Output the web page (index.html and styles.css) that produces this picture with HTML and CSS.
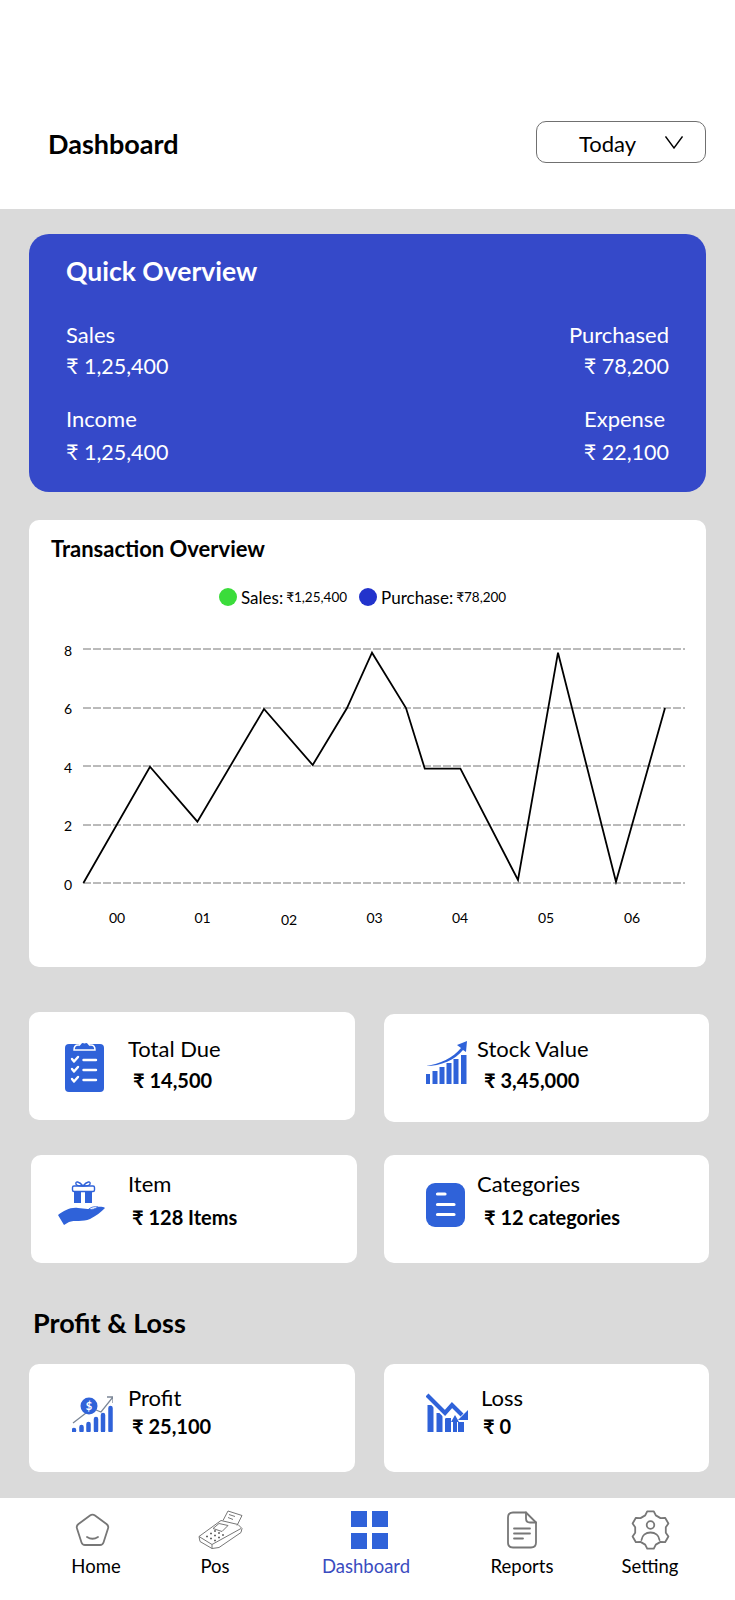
FILE: index.html
```html
<!DOCTYPE html>
<html lang="en">
<head>
    <meta charset="UTF-8">
    <meta name="viewport" content="width=device-width, initial-scale=1.0">
    <title>Dashboard</title>
    <link rel="stylesheet" href="styles.css">
</head>
<body>
    <header class="top-bar">
        <h1>Dashboard</h1>
        <div class="range-select">
            <span>Today</span>
            <svg class="chevron" viewBox="0 0 18 13"><path d="M0.5 0.5 L9 12 L17.5 0.5"/></svg>
        </div>
    </header>

    <main class="content">
        <section class="quick">
            <h2>Quick Overview</h2>
            <div class="quick-grid">
                <div>
                    <div class="quick-label">Sales</div>
                    <div class="quick-value">₹ 1,25,400</div>
                </div>
                <div class="quick-right">
                    <div class="quick-label">Purchased</div>
                    <div class="quick-value">₹ 78,200</div>
                </div>
                <div class="quick-lower">
                    <div class="quick-label">Income</div>
                    <div class="quick-value">₹ 1,25,400</div>
                </div>
                <div class="quick-right quick-lower">
                    <div class="quick-label expense-label">Expense</div>
                    <div class="quick-value">₹ 22,100</div>
                </div>
            </div>
        </section>

        <section class="transactions">
            <h3>Transaction Overview</h3>
            <div class="legend">
                <span class="dot dot-green"></span>
                <span class="legend-name">Sales:</span>
                <span class="legend-amount legend-amount-first">₹1,25,400</span>
                <span class="dot dot-blue"></span>
                <span class="legend-name">Purchase:</span>
                <span class="legend-amount">₹78,200</span>
            </div>
            <svg class="chart" viewBox="0 0 677 300">
                <line class="grid-line" x1="54" y1="19" x2="656" y2="19"/>
                <line class="grid-line" x1="54" y1="78" x2="656" y2="78"/>
                <line class="grid-line" x1="54" y1="136" x2="656" y2="136"/>
                <line class="grid-line" x1="54" y1="195" x2="656" y2="195"/>
                <line class="grid-line" x1="54" y1="253" x2="656" y2="253"/>
                <polyline class="chart-line" points="54.4,253 121,136.7 168.4,191.7 235,79 283.7,135 318,78 343,22.7 377,78 395.8,138.7 431.4,138.7 489,250 529,22.7 587,251.7 636,78"/>
                <text class="axis-y" x="39" y="26">8</text>
                <text class="axis-y" x="39" y="84">6</text>
                <text class="axis-y" x="39" y="143">4</text>
                <text class="axis-y" x="39" y="201">2</text>
                <text class="axis-y" x="39" y="260">0</text>
                <text class="axis-x" x="88" y="293">00</text>
                <text class="axis-x" x="173.5" y="293">01</text>
                <text class="axis-x" x="260" y="295">02</text>
                <text class="axis-x" x="345.6" y="293">03</text>
                <text class="axis-x" x="431" y="293">04</text>
                <text class="axis-x" x="517" y="293">05</text>
                <text class="axis-x" x="603" y="293">06</text>
            </svg>
        </section>

        <section class="stats-grid">
            <div class="stat-card stat-due">
                <svg class="stat-icon" width="39" height="56" viewBox="0 0 39 56">
                    <rect class="fill-blue" x="0" y="8" width="39" height="48" rx="4"/>
                    <path class="clip-edge" d="M9 14 Q9 9 13 9 H14.500 A5.500 5.500 0 0 1 24.500 9 H26 Q30 9 30 14 Z"/>
                    <circle class="fill-white" cx="19.500" cy="6" r="1.600"/>
                    <path class="icon-white" d="M7 23 L9 25.500 L13 21 M7 33 L9 35.500 L13 31 M7 43 L9 45.500 L13 41"/>
                    <path class="icon-white" d="M18.500 24 H31 M18.500 34 H31 M18.500 44 H31"/>
                </svg>
                <div class="stat-text">
                    <div class="stat-label">Total Due</div>
                    <div class="stat-value">₹ 14,500</div>
                </div>
            </div>
            <div class="stat-card stat-stock">
                <svg class="stat-icon" width="41" height="43" viewBox="0 0 41 43">
                    <rect class="fill-blue" x="0" y="33" width="4" height="10"/>
                    <rect class="fill-blue" x="6.500" y="30" width="5" height="13"/>
                    <rect class="fill-blue" x="13.500" y="26" width="5" height="17"/>
                    <rect class="fill-blue" x="20.500" y="22" width="5" height="21"/>
                    <rect class="fill-blue" x="27.500" y="18" width="5" height="25"/>
                    <rect class="fill-blue" x="35" y="14" width="5.500" height="29"/>
                    <path class="fill-blue" d="M0 25 C14 23 27 17 35 7 L31 4 L41 0 L40 11 L37 9 C29 19 15 25 0 25 Z"/>
                </svg>
                <div class="stat-text">
                    <div class="stat-label">Stock Value</div>
                    <div class="stat-value">₹ 3,45,000</div>
                </div>
            </div>
            <div class="stat-card stat-item">
                <svg class="stat-icon" width="47" height="44" viewBox="0 0 47 44">
                    <path class="gift-line" d="M25 5 C21 0 17 0 18 3 C18 5 22 5 25 5 C28 5 32 5 32 3 C33 0 29 0 25 5 Z"/>
                    <rect class="gift-line" x="14.500" y="5" width="22" height="5.500" rx="1.500"/>
                    <rect class="fill-blue" x="16" y="11" width="7" height="11"/>
                    <rect class="fill-blue" x="27" y="11" width="7" height="11"/>
                    <path class="fill-blue" d="M0 34 C6 30 12 26 20 27 C25 27 30 29 34 27 C38 26 44 25 47 27 C43 31 38 35 32 38 C25 41 16 39 11 41 L6 44 Z"/>
                    <path class="hand-fold" d="M31 28 C33 26 37 25 40 26 C37 28 34 29 31 28 Z"/>
                </svg>
                <div class="stat-text">
                    <div class="stat-label">Item</div>
                    <div class="stat-value">₹ 128 Items</div>
                </div>
            </div>
            <div class="stat-card stat-categories">
                <svg class="stat-icon" width="39" height="44" viewBox="0 0 39 44">
                    <rect class="fill-blue" x="0" y="0" width="39" height="44" rx="9"/>
                    <path class="icon-white icon-thick" d="M11.500 11 H19 M11.500 21.500 H28 M11.500 31.500 H28"/>
                </svg>
                <div class="stat-text">
                    <div class="stat-label">Categories</div>
                    <div class="stat-value">₹ 12 categories</div>
                </div>
            </div>
        </section>

        <h2 class="section-title">Profit &amp; Loss</h2>

        <section class="stats-grid">
            <div class="stat-card stat-profit">
                <svg class="stat-icon" width="41" height="37" viewBox="0 0 41 37">
                    <path class="bar-round" d="M2 35.500 V35 M9.500 35.500 V32 M16.500 35.500 V29 M24 35.500 V24 M31 35.500 V20 M38.500 35.500 V13"/>
                    <path class="arrow-gray" d="M1 28 L14 18 M24 15 L29 17 L41 2 M35 2 H41 V8"/>
                    <circle class="fill-blue" cx="17" cy="11" r="8.500"/>
                    <text class="coin-text" x="17" y="15">$</text>
                </svg>
                <div class="stat-text">
                    <div class="stat-label">Profit</div>
                    <div class="stat-value">₹ 25,100</div>
                </div>
            </div>
            <div class="stat-card stat-loss">
                <svg class="stat-icon" width="42" height="39" viewBox="0 0 42 39">
                    <rect class="fill-blue" x="1.500" y="12" width="6" height="27"/>
                    <rect class="fill-blue" x="10.500" y="20" width="6" height="19"/>
                    <rect class="fill-blue" x="19" y="25" width="6" height="14"/>
                    <rect class="fill-blue" x="32" y="29" width="6" height="10"/>
                    <path class="loss-edge" d="M1 2 L19 20 L26 12 L36 22"/>
                    <path class="loss-line" d="M1 2 L19 20 L26 12 L36 22"/>
                    <path class="fill-blue" d="M32 27 H42 V17 Z"/>
                    <path class="fill-blue" d="M27 39 V29 H25 L29 22 L33 29 H31 V39 Z"/>
                </svg>
                <div class="stat-text">
                    <div class="stat-label">Loss</div>
                    <div class="stat-value">₹ 0</div>
                </div>
            </div>
        </section>
    </main>

    <nav class="bottom-nav">
        <div class="nav-item">
            <svg class="nav-icon nav-icon-home" width="37" height="36" viewBox="0 0 37 36">
                <path class="line-gray" d="M16 3.500 Q18.500 1.700 21 3.500 L32.500 12 Q35 14 34 16.500 L29.500 30.500 Q28.700 33 26 33 H11 Q8.300 33 7.500 30.500 L3 16.500 Q2 14 4.500 12 Z"/>
                <path class="line-gray" d="M13 25 Q18.500 28.500 24 25"/>
            </svg>
            <span>Home</span>
        </div>
        <div class="nav-item">
            <svg class="nav-icon nav-icon-pos" width="46" height="39" viewBox="0 0 46 39">
                <path class="line-thin" d="M1 26 L23 10 L40 14 L44 18 L43 22 L21 37 L14 38 L2 31 Z"/>
                <path class="line-thin" d="M1 26 L14 34 L14 38 M14 34 L43 18"/>
                <path class="line-thin" d="M21 13 L30 15 L24 21 L15 18 Z"/>
                <path class="line-thin" d="M25 10 L30 0.500 L44 5 L39 15"/>
                <path class="line-thin" d="M31 4 L37 6 M30 7 L35 9"/>
                <path class="key-dots" d="M8 26 H10 M12 28 H14 M16 30 H18 M12 23 H14 M16 25 H18 M20 27 H22 M16 20.500 H18 M20 22.500 H22 M24 24.500 H26"/>
            </svg>
            <span>Pos</span>
        </div>
        <div class="nav-item nav-active">
            <svg class="nav-icon nav-icon-dash" width="38" height="38" viewBox="0 0 38 38">
                <rect class="fill-blue" x="0" y="0" width="16" height="16"/>
                <rect class="fill-blue" x="21" y="0" width="16" height="16"/>
                <rect class="fill-blue" x="0" y="22" width="16" height="16"/>
                <rect class="fill-blue" x="21" y="22" width="16" height="16"/>
            </svg>
            <span>Dashboard</span>
        </div>
        <div class="nav-item">
            <svg class="nav-icon" width="30" height="37" viewBox="0 0 30 37">
                <path class="line-gray" d="M19 1 H6 Q1 1 1 6 V31 Q1 36 6 36 H24 Q29 36 29 31 V11 Z"/>
                <path class="line-gray" d="M19 1 V7 Q19 11 23 11 H29"/>
                <path class="line-gray" d="M7 17 H23 M7 22 H23 M7 27 H16"/>
            </svg>
            <span>Reports</span>
        </div>
        <div class="nav-item">
            <svg class="nav-icon" width="39" height="40" viewBox="0 0 39 40">
                <path class="line-gray" d="M16.200 1.300 H22.800 L24.800 5.400 L29.500 8.100 L34.100 7.800 L37.400 13.500 L34.800 17.300 V22.700 L37.400 26.500 L34.100 32.200 L29.500 31.900 L24.800 34.600 L22.800 38.700 H16.200 L14.200 34.600 L9.500 31.900 L4.900 32.200 L1.600 26.500 L4.200 22.700 V17.300 L1.600 13.500 L4.900 7.800 L9.500 8.100 L14.200 5.400 Z"/>
                <circle class="line-gray" cx="19.500" cy="15" r="3.800"/>
                <path class="line-gray" d="M10.500 30 C11 25 15 22.500 19.500 22.500 C24 22.500 28 25 28.500 30"/>
            </svg>
            <span>Setting</span>
        </div>
    </nav>
</body>
</html>
```

FILE: styles.css
```css
* {
    box-sizing: border-box;
}
body {
    margin: 0;
    font-family: Lato, "Open Sans", sans-serif;
    background-color: #fff;
    color: #000;
}
h1, h2, h3 {
    margin: 0;
}

/* header */
.top-bar {
    display: flex;
    justify-content: space-between;
    align-items: center;
    height: 209px;
    padding: 121px 29px 46px 48px;
}
.top-bar h1 {
    font-size: 27px;
    font-weight: 700;
    margin-top: 2px;
}
.range-select {
    display: flex;
    align-items: center;
    width: 170px;
    height: 42px;
    padding-left: 42px;
    border: 1px solid #707070;
    border-radius: 10px;
    font-size: 22px;
}
.range-select span {
    margin-top: 2px;
}
.chevron {
    width: 18px;
    height: 13px;
    margin-left: 29px;
    fill: none;
    stroke: #000;
    stroke-width: 1.4;
}

/* grey area */
.content {
    padding: 25px 26px 26px 29px;
    background-color: #dadada;
}

.quick {
    width: 677px;
    height: 258px;
    padding: 20px 37px 0;
    border-radius: 20px;
    background-color: #3549c9;
    color: #fff;
}
.quick h2 {
    font-size: 26.500px;
    line-height: 34px;
    font-weight: 700;
}
.quick-grid {
    display: grid;
    grid-template-columns: 1fr 1fr;
    row-gap: 22px;
    margin-top: 32px;
}
.quick-right {
    text-align: right;
}
.quick-label {
    font-size: 22px;
    line-height: 30px;
}
.quick-value {
    font-size: 21.500px;
    line-height: 32px;
}
.quick-lower .quick-value {
    margin-top: 2px;
}
.expense-label {
    margin-right: 4px;
}

.transactions {
    width: 677px;
    height: 447px;
    margin-top: 28px;
    padding-top: 14px;
    border-radius: 10px;
    background-color: #fff;
}
.transactions h3 {
    margin-left: 22px;
    font-size: 22px;
    line-height: 30px;
    font-weight: 700;
}
.legend {
    display: flex;
    align-items: center;
    height: 20px;
    margin-top: 23px;
    padding-left: 190px;
}
.dot {
    width: 18px;
    height: 18px;
    margin-right: 4px;
    border-radius: 50%;
}
.dot-green {
    background-color: #3bdc3b;
}
.dot-blue {
    background-color: #2233cc;
}
.legend-name {
    font-size: 17px;
    margin-right: 3px;
}
.legend-amount {
    font-size: 13.500px;
}
.legend-amount-first {
    margin-right: 12px;
}
.chart {
    display: block;
    width: 677px;
    height: 300px;
    margin-top: 23px;
}
.grid-line {
    stroke: #777;
    stroke-width: 1;
    stroke-dasharray: 8 2;
}
.chart-line {
    fill: none;
    stroke: #000;
    stroke-width: 1.8;
}
.axis-y, .axis-x {
    font-size: 14px;
    text-anchor: middle;
}

/* stat cards */
.stats-grid {
    display: grid;
    grid-template-columns: 326px 325px;
    column-gap: 29px;
    row-gap: 33px;
    align-items: start;
    margin-top: 45px;
}
.stat-card {
    display: flex;
    align-items: flex-start;
    height: 108px;
    border-radius: 10px;
    background-color: #fff;
}
.stat-icon {
    flex: none;
}
.stat-label {
    font-size: 22px;
    line-height: 30px;
}
.stat-value {
    margin-top: 1px;
    padding-left: 5px;
    font-size: 20px;
    line-height: 30px;
    font-weight: 700;
}
.stat-due {
    padding-left: 36px;
}
.stat-due .stat-icon {
    margin: 24px 24px 0 0;
}
.stat-due .stat-text {
    margin-top: 22px;
}
.stat-stock {
    margin-top: 2px;
    padding-left: 42px;
}
.stat-stock .stat-icon {
    margin: 27px 10px 0 0;
}
.stat-stock .stat-text {
    margin-top: 20px;
}
.stat-stock .stat-value {
    padding-left: 7px;
}
.stat-item {
    margin: 0 -2px 0 2px;
    padding-left: 27px;
}
.stat-item .stat-icon {
    margin: 26px 23px 0 0;
}
.stat-item .stat-text {
    margin-top: 14px;
}
.stat-item .stat-value {
    margin-top: 3px;
    padding-left: 4px;
}
.stat-categories {
    padding-left: 42px;
}
.stat-categories .stat-icon {
    margin: 28px 12px 0 0;
}
.stat-categories .stat-text {
    margin-top: 14px;
}
.stat-categories .stat-value {
    margin-top: 3px;
    padding-left: 7px;
}

.section-title {
    margin: 42px 0 23px 4px;
    font-size: 27px;
    line-height: 36px;
    font-weight: 700;
}
.section-title + .stats-grid {
    margin-top: 0;
}
.stat-profit {
    padding-left: 43px;
}
.stat-profit .stat-icon {
    margin: 31px 15px 0 0;
}
.stat-profit .stat-text {
    margin-top: 19px;
}
.stat-profit .stat-value {
    margin-top: -2px;
    padding-left: 4px;
}
.stat-loss {
    padding-left: 42px;
}
.stat-loss .stat-icon {
    margin: 29px 13px 0 0;
}
.stat-loss .stat-text {
    margin-top: 19px;
}
.stat-loss .stat-value {
    margin-top: -2px;
    padding-left: 2px;
}

/* icon parts */
.fill-blue {
    fill: #2f62d9;
}
.fill-white {
    fill: #fff;
}
.icon-white {
    fill: none;
    stroke: #fff;
    stroke-width: 2.4;
    stroke-linecap: round;
    stroke-linejoin: round;
}
.icon-thick {
    stroke-width: 3.2;
}
.clip-edge {
    fill: #2f62d9;
    stroke: #fff;
    stroke-width: 1.5;
}
.gift-line {
    fill: none;
    stroke: #2f62d9;
    stroke-width: 1.4;
}
.hand-fold {
    fill: #fff;
    stroke: #2f62d9;
    stroke-width: 0.8;
}
.bar-round {
    fill: none;
    stroke: #2f62d9;
    stroke-width: 4.5;
    stroke-linecap: round;
}
.arrow-gray {
    fill: none;
    stroke: #7c8797;
    stroke-width: 1.3;
}
.coin-text {
    fill: #fff;
    font-size: 11px;
    font-weight: 700;
    text-anchor: middle;
}
.loss-edge {
    fill: none;
    stroke: #fff;
    stroke-width: 8;
}
.loss-line {
    fill: none;
    stroke: #2f62d9;
    stroke-width: 4.2;
}
.line-gray {
    fill: none;
    stroke: #777;
    stroke-width: 1.8;
    stroke-linejoin: round;
    stroke-linecap: round;
}
.line-thin {
    fill: none;
    stroke: #777;
    stroke-width: 1;
    stroke-linejoin: round;
}
.key-dots {
    fill: none;
    stroke: #666;
    stroke-width: 1.5;
}

/* bottom nav */
.bottom-nav {
    display: grid;
    grid-template-columns: 120px 118px 184px 128px 128px;
    height: 102px;
    padding: 12px 0 0 36px;
    background-color: #fff;
}
.nav-item {
    display: flex;
    flex-direction: column;
    align-items: center;
    font-size: 18.500px;
    line-height: 24px;
}
.nav-icon {
    height: 40px;
    margin-bottom: 4px;
}
.nav-icon-home {
    margin-right: 7px;
}
.nav-icon-pos {
    margin-left: 12px;
}
.nav-icon-dash {
    margin-left: 8px;
}
.nav-active {
    color: #3b4cc0;
}
```
